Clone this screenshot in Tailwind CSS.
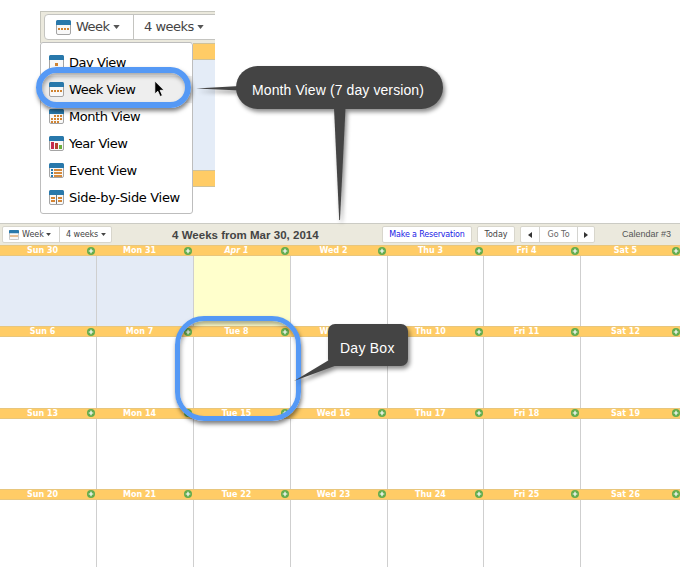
<!DOCTYPE html>
<html lang="en">
<head>
<meta charset="utf-8">
<title>Calendar views</title>
<script src="https://cdn.jsdelivr.net/npm/@tailwindcss/browser@4"></script>
</head>
<body class="bg-white">
<svg class="hidden">
  <defs>
    <symbol id="base" viewBox="0 0 15 15"><rect x=".5" y=".5" width="14" height="14" rx="1.5" fill="#f8f8f8" stroke="#a4a4a4"/><path d="M0 5V1.500Q0 0 1.500 0h12Q15 0 15 1.500V5z" fill="#2878ab"/></symbol>
    <symbol id="day" viewBox="0 0 15 15"><use href="#base"/><rect x="6" y="8" width="3" height="3" fill="#d08432"/></symbol>
    <symbol id="week" viewBox="0 0 15 15"><use href="#base"/><path d="M2 9h11" stroke="#d08432" stroke-width="2" stroke-dasharray="2 1"/></symbol>
    <symbol id="month" viewBox="0 0 15 15"><use href="#base"/><path d="M5 7h8M2 10h11M2 13h8" stroke="#d08432" stroke-width="2" stroke-dasharray="2 1"/></symbol>
    <symbol id="year" viewBox="0 0 15 15"><use href="#base"/><path d="M2 6h3v7H2z" fill="#c42c4e"/><path d="M6 7h3v6H6z" fill="#b7402f"/><path d="M10 9h3v4h-3z" fill="#69ad3c"/></symbol>
    <symbol id="event" viewBox="0 0 15 15"><use href="#base"/><path d="M2 7h2M2 10h2M2 13h2" stroke="#2878ab" stroke-width="2"/><path d="M5 7h8M5 10h8M5 13h8" stroke="#d58a3c" stroke-width="2"/></symbol>
    <symbol id="side" viewBox="0 0 15 15"><use href="#base"/><path d="M7.500 5v9" stroke="#777"/><path d="M2 8h4M2 11h4M9 8h4M9 11h4" stroke="#d58432" stroke-width="2"/></symbol>
    <symbol id="plus" viewBox="0 0 8 8"><circle cx="4" cy="4" r="4" fill="#63ac4d"/><path d="M4 1.700v4.600M1.700 4h4.600" stroke="#fff" stroke-width="1.200"/></symbol>
  </defs>
</svg>
<div class="relative w-[680px] h-[567px] overflow-hidden flex flex-col bg-white text-[#444] font-['DejaVu_Sans',sans-serif]">

  <!-- Enlarged view selector -->
  <section class="ml-[40px] mt-[11px] h-[212px] w-[175px] shrink-0 flex flex-col overflow-hidden">
    <div class="h-[32px] shrink-0 bg-[#ebe9dd] border-t border-l border-[#c6c6bd] pt-[2px] pl-[3px] flex">
      <div class="flex h-[26px] w-[180px] shrink-0 bg-white border border-[#c4c4c0] rounded-[4px] text-[13px]">
        <div class="w-[89px] flex items-center pl-[11px] border-r border-[#c4c4c0]">
          <svg class="w-[15px] h-[15px] mr-[5px] shrink-0"><use href="#week"/></svg>
          <span class="w-[37px] tracking-[-0.5px]">Week</span>
          <svg class="w-[7px] h-[4px] shrink-0" viewBox="0 0 8 5"><path d="M0 0h8L4 5z" fill="#555"/></svg>
        </div>
        <div class="flex items-center pl-[10px]">
          <span class="w-[53px] whitespace-nowrap tracking-[-0.5px]">4 weeks</span>
          <svg class="w-[7px] h-[4px] shrink-0" viewBox="0 0 8 5"><path d="M0 0h8L4 5z" fill="#555"/></svg>
        </div>
      </div>
    </div>
    <div class="flex grow mt-[-1px]">
      <div id="menu" class="w-[153px] h-[172px] shrink-0 bg-white border border-[#bdbdbd] rounded-[3px] pt-[6px] text-[13px] text-black"></div>
      <div class="w-[22px] pt-px">
        <div class="h-[17px] bg-[#ffcc66] border-y border-[#cfc29a]"></div>
        <div class="h-[110px] bg-[#e4ecf7]"></div>
        <div class="h-[17px] bg-[#ffcc66] border-y border-[#cfc29a]"></div>
      </div>
    </div>
  </section>

  <!-- Calendar toolbar -->
  <header class="h-[22px] shrink-0 bg-[#ebe9dd] border-t border-[#cbcbc4] flex items-center text-[8px]">
    <div class="ml-[2px] flex h-[17px] w-[110px] bg-white border border-[#d8d6cc] rounded-[2px]">
      <div class="w-[57px] flex items-center pl-[6px] border-r border-[#d4d4d0]">
        <svg class="w-[10px] h-[10px] mr-[3px] shrink-0"><use href="#week"/></svg>
        <span class="w-[24px]">Week</span>
        <svg class="w-[5px] h-[3px] shrink-0" viewBox="0 0 8 5"><path d="M0 0h8L4 5z" fill="#444"/></svg>
      </div>
      <div class="flex items-center pl-[6px]">
        <span class="w-[35px] whitespace-nowrap tracking-[-0.1px]">4 weeks</span>
        <svg class="w-[5px] h-[3px] shrink-0" viewBox="0 0 8 5"><path d="M0 0h8L4 5z" fill="#444"/></svg>
      </div>
    </div>
    <h1 class="ml-[60px] w-[210px] whitespace-nowrap font-['Liberation_Sans',sans-serif] font-bold text-[11.5px] leading-[14px] tracking-[0.02px]">4 Weeks from Mar 30, 2014</h1>
    <div class="w-[90px] h-[17px] bg-white border border-[#d8d6cc] rounded-[2px] flex items-center justify-center whitespace-nowrap text-[#1a1ae6] tracking-[-0.17px]">Make a Reservation</div>
    <div class="ml-[5px] w-[38px] h-[17px] bg-white border border-[#d8d6cc] rounded-[2px] flex items-center justify-center">Today</div>
    <div class="ml-[5px] w-[75px] h-[17px] bg-white border border-[#d8d6cc] rounded-[2px] flex">
      <div class="w-[19px] flex items-center justify-center border-r border-[#d4d4d0]"><svg class="w-[4px] h-[6px]" viewBox="0 0 4 6"><path d="M4 0v6L0 3z" fill="#333"/></svg></div>
      <div class="w-[38px] flex items-center justify-center border-r border-[#d4d4d0] text-[#666]">Go To</div>
      <div class="grow flex items-center justify-center"><svg class="w-[4px] h-[6px]" viewBox="0 0 4 6"><path d="M0 0v6l4-3z" fill="#333"/></svg></div>
    </div>
    <div class="ml-[27px] whitespace-nowrap font-['Liberation_Sans',sans-serif] text-[9px] text-[#555]">Calendar #3</div>
  </header>
  <main id="weeks" class="flex flex-col"></main>

  <!-- Annotations -->
  <div class="absolute left-[36px] top-[67px] w-[155px] h-[41px] rounded-full border-[6px] border-[#5599f5] shadow-[1px_3px_4px_rgba(0,0,0,.5),inset_1px_3px_4px_rgba(0,0,0,.35)]"></div>
  <svg class="absolute left-[154px] top-[80px] w-[11px] h-[18px]" viewBox="0 0 11 18"><path d="M.8 1v13l3-2.800 2.300 5.300 2.300-1-2.300-5.200h4z" fill="#000" stroke="#fff" stroke-width=".8"/></svg>
  <div class="absolute left-[175px] top-[316px] w-[126px] h-[105px] rounded-[29px] border-[5px] border-[#5599f5] shadow-[1px_3px_4px_rgba(0,0,0,.5),inset_1px_3px_4px_rgba(0,0,0,.35)]"></div>
  <svg class="absolute left-0 top-0 w-[680px] h-[567px] drop-shadow-[2px_3px_2px_rgba(0,0,0,.45)]" viewBox="0 0 680 567" fill="#444">
    <rect x="236" y="66" width="207" height="43" rx="21.500"/>
    <path d="M196 88.500L240 86v4.500z"/>
    <path d="M334 108h11.500L340 220h-.8z"/>
    <rect x="328" y="324" width="80" height="42" rx="7"/>
    <path d="M294 381L329 360l7 5.500z"/>
  </svg>
  <div class="absolute left-[252px] top-[82px] leading-[16px] whitespace-nowrap text-white font-['Liberation_Sans',sans-serif] text-[14px] tracking-[0.1px]">Month View (7 day version)</div>
  <div class="absolute left-[340px] top-[340px] leading-[16px] whitespace-nowrap text-white font-['Liberation_Sans',sans-serif] text-[14px] tracking-[0.25px]">Day Box</div>
</div>
<script>
const views = [['day','Day View'],['week','Week View'],['month','Month View'],['year','Year View'],['event','Event View'],['side','Side-by-Side View']];
document.getElementById('menu').innerHTML = views.map(([id, name]) =>
  `<div class="h-[27px] flex items-center pl-[8px] whitespace-nowrap ${id === 'side' ? 'tracking-[-0.32px]' : 'tracking-[-0.45px]'} ${id === 'week' ? 'bg-[#eeeeee]' : ''}"><svg class="w-[15px] h-[15px] mr-[5px] shrink-0"><use href="#${id}"/></svg>${name}</div>`).join('');
const weeks = [
  ['Sun 30','Mon 31','Apr 1','Wed 2','Thu 3','Fri 4','Sat 5'],
  ['Sun 6','Mon 7','Tue 8','Wed 9','Thu 10','Fri 11','Sat 12'],
  ['Sun 13','Mon 14','Tue 15','Wed 16','Thu 17','Fri 18','Sat 19'],
  ['Sun 20','Mon 21','Tue 22','Wed 23','Thu 24','Fri 25','Sat 26']];
document.getElementById('weeks').innerHTML = weeks.map((week, w) =>
  `<div class="h-[81.300px] shrink-0 grid grid-cols-[97px_97px_97px_97px_96px_97px_99px]">` + week.map((d, i) => {
    const fill = w === 0 && i < 2 ? 'bg-[#e4ebf6]' : w === 0 && i === 2 ? 'bg-[#ffffcc]' : 'bg-white';
    return `<div class="flex flex-col ${i < 6 ? 'border-r border-[#cfcfcf]' : ''} ${fill}">
      <div class="h-[11px] ${i < 6 ? '-mr-px' : ''} shrink-0 bg-[#ffcc66] border-y border-[#e8c67c] flex items-center">
        <div class="${i === 6 ? 'w-[89px]' : 'w-[85px]'} text-center text-[8px] leading-[9px] font-bold text-white whitespace-nowrap ${d === 'Apr 1' ? 'italic' : ''}">${d}</div>
        <svg class="w-[8px] h-[8px] ml-[1.500px] shrink-0"><use href="#plus"/></svg>
      </div></div>`;
  }).join('') + '</div>').join('');
</script>
</body>
</html>
